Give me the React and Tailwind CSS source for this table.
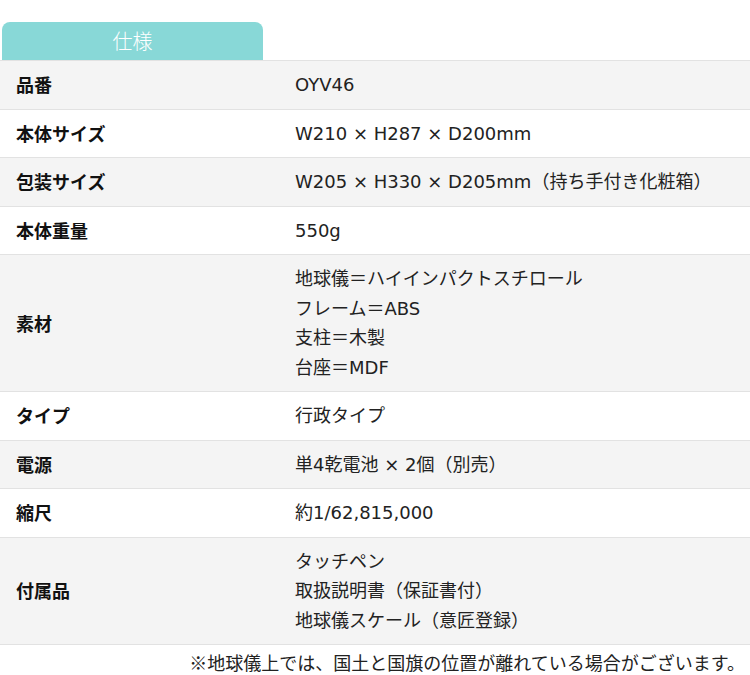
export default function App() {
  const rows = [
    { label: "品番", values: ["OYV46"], gray: true },
    { label: "本体サイズ", values: ["W210 × H287 × D200mm"], gray: false },
    { label: "包装サイズ", values: ["W205 × H330 × D205mm（持ち手付き化粧箱）"], gray: true },
    { label: "本体重量", values: ["550g"], gray: false },
    {
      label: "素材",
      values: ["地球儀＝ハイインパクトスチロール", "フレーム＝ABS", "支柱＝木製", "台座＝MDF"],
      gray: true,
    },
    { label: "タイプ", values: ["行政タイプ"], gray: false },
    { label: "電源", values: ["単4乾電池 × 2個（別売）"], gray: true },
    { label: "縮尺", values: ["約1/62,815,000"], gray: false },
    { label: "付属品", values: ["タッチペン", "取扱説明書（保証書付）", "地球儀スケール（意匠登録）"], gray: true },
  ];
  return (
    <div
      className="w-[750px] h-[675px] bg-white overflow-hidden text-[#222]"
      style={{ fontFamily: '"Noto Sans CJK JP", "Noto Sans", sans-serif' }}
    >
      <div className="h-[22px]" />
      <div className="ml-[2px] w-[261px] h-[38px] rounded-t-[8px] bg-[#88d8d7] flex items-center justify-center text-white text-[20px] font-light">
        仕様
      </div>
      <div className="border-t border-[#e2e2e2]">
        {rows.map((r, i) => (
          <div
            key={i}
            className={`flex items-center border-b border-[#e2e2e2] py-[9px] ${r.gray ? "bg-[#f4f4f4]" : "bg-white"}`}
          >
            <div className="w-[295px] pl-[16px] font-bold text-[18px] text-[#111]">{r.label}</div>
            <div
              className="flex flex-col text-[18px] leading-[29.5px]"
              style={{ fontFamily: '"DejaVu Sans", "Noto Sans CJK JP", sans-serif' }}
            >
              {r.values.map((v, j) => (
                <div key={j}>{v}</div>
              ))}
            </div>
          </div>
        ))}
      </div>
      <div className="flex justify-end pr-[5px] pt-[4px] text-[18px] leading-[26px]">
        ※地球儀上では、国土と国旗の位置が離れている場合がございます。
      </div>
    </div>
  );
}
